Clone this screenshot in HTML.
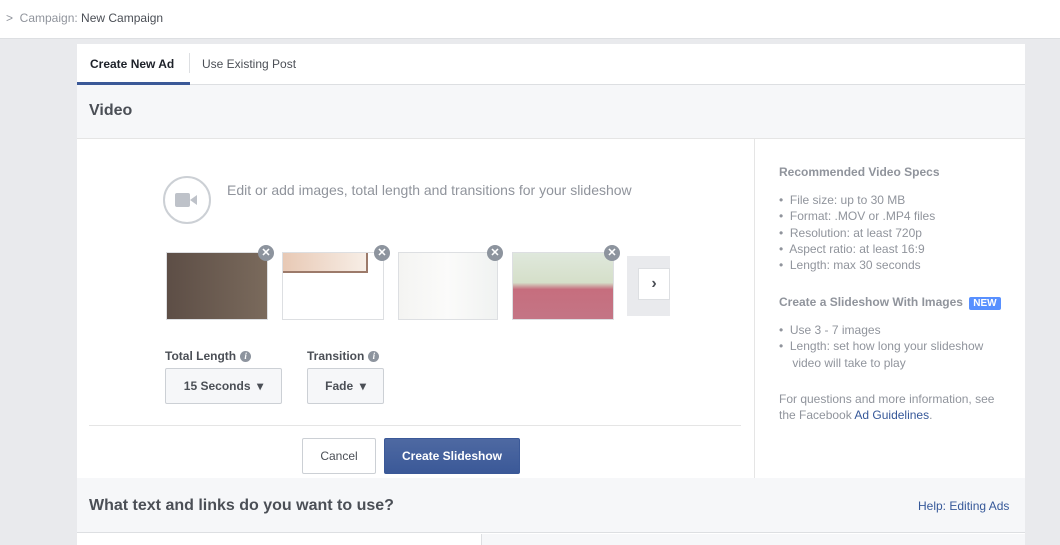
<!DOCTYPE html>
<html><head><style>
*{margin:0;padding:0;box-sizing:border-box}
body{width:1060px;height:545px;overflow:hidden;background:#e9eaed;font-family:"Liberation Sans",Arial,sans-serif;position:relative;color:#4b4f56}
.a{position:absolute}
.top{left:0;top:0;width:1060px;height:39px;background:#fff;border-bottom:1px solid #dddfe2}
.card{left:77px;top:44px;width:948px;height:501px;background:#fff}
.thumb{top:252px;height:68px;border:1px solid #dddfe2}
.x{width:16px;height:16px;border-radius:50%;background:#8d949e;color:#fff;font-size:11px;font-weight:bold;text-align:center;line-height:16px}
.btn{border:1px solid #ccd0d5;background:#f6f7f9;border-radius:2px;font-size:12px;font-weight:bold;color:#4b4f56;text-align:center}
.side{font-size:12px;color:#90949c;line-height:16.3px}
.info{display:inline-block;width:11px;height:11px;border-radius:50%;background:#8d949e;color:#fff;font-size:9px;text-align:center;line-height:11px;font-style:italic;font-family:"Liberation Serif",serif;vertical-align:middle;margin-left:4px}
</style></head><body>
<div class="a top"><div class="a" style="left:6px;top:11px;font-size:12px;color:#90949c">&gt;&nbsp; Campaign: <span style="color:#4b4f56">New Campaign</span></div></div>
<div class="a card"></div>
<div class="a" style="left:77px;top:84px;width:948px;height:1px;background:#dddfe2"></div>
<div class="a" style="left:90px;top:57px;font-size:12px;font-weight:bold;color:#1d2129">Create New Ad</div>
<div class="a" style="left:189px;top:53px;width:1px;height:20px;background:#dddfe2"></div>
<div class="a" style="left:202px;top:57px;font-size:12px;color:#4b4f56">Use Existing Post</div>
<div class="a" style="left:77px;top:82px;width:113px;height:3px;background:#3b5998"></div>
<div class="a" style="left:77px;top:85px;width:948px;height:54px;background:#f6f7f9;border-bottom:1px solid #e5e5e5"></div>
<div class="a" style="left:89px;top:102px;font-size:16px;font-weight:bold;color:#4b4f56">Video</div>
<div class="a" style="left:754px;top:139px;width:1px;height:339px;background:#e5e5e5"></div>
<div class="a" style="left:163px;top:176px;width:48px;height:48px;border:2px solid #ccd0d5;border-radius:50%"></div>
<div class="a" style="left:175px;top:193px;width:15px;height:14px;background:#bec2c9;border-radius:2px"></div>
<div class="a" style="left:190px;top:195px;width:0;height:0;border-top:5px solid transparent;border-bottom:5px solid transparent;border-right:7px solid #bec2c9"></div>
<div class="a" style="left:227px;top:182px;font-size:14px;color:#90949c">Edit or add images, total length and transitions for your slideshow</div>
<div class="a thumb" style="left:166px;width:102px;background:linear-gradient(90deg,#5d4e46,#7a6a5c)"></div>
<div class="a thumb" style="left:282px;width:102px;background:#fff"><div class="a" style="left:0;top:0;width:85px;height:20px;background:linear-gradient(90deg,#e8c9b5,#f7eee6);border-bottom:2px solid #9c7a6a;border-right:2px solid #9c7a6a"></div></div>
<div class="a thumb" style="left:398px;width:100px;background:linear-gradient(90deg,#f4f4f2,#fbfbfa,#f0f2f1)"></div>
<div class="a thumb" style="left:512px;width:102px;background:linear-gradient(180deg,#dfe8dc 0%,#d5dfc9 45%,#c66e7e 55%,#c47585 100%)"></div>
<div class="a x" style="left:258px;top:245px">✕</div>
<div class="a x" style="left:374px;top:245px">✕</div>
<div class="a x" style="left:487px;top:245px">✕</div>
<div class="a x" style="left:604px;top:245px">✕</div>
<div class="a" style="left:627px;top:256px;width:43px;height:60px;background:#e9eaed"></div>
<div class="a" style="left:638px;top:268px;width:32px;height:32px;background:#fff;border:1px solid #dddfe2;font-size:16px;font-weight:bold;text-align:center;line-height:30px;color:#4b4f56">›</div>
<div class="a" style="left:165px;top:349px;font-size:12px;font-weight:bold;color:#4b4f56">Total Length<span class="info">i</span></div>
<div class="a" style="left:307px;top:349px;font-size:12px;font-weight:bold;color:#4b4f56">Transition<span class="info">i</span></div>
<div class="a btn" style="left:165px;top:368px;width:117px;height:36px;line-height:34px">15 Seconds &nbsp;▾</div>
<div class="a btn" style="left:307px;top:368px;width:77px;height:36px;line-height:34px">Fade &nbsp;▾</div>
<div class="a" style="left:89px;top:425px;width:652px;height:1px;background:#e5e5e5"></div>
<div class="a btn" style="left:302px;top:438px;width:74px;height:36px;line-height:34px;background:#fff;font-weight:normal">Cancel</div>
<div class="a" style="left:384px;top:438px;width:136px;height:36px;background:#4267b2;background:linear-gradient(#4e69a2,#3b5998);border:1px solid #3b5998;border-radius:2px;color:#fff;font-size:12px;font-weight:bold;text-align:center;line-height:34px">Create Slideshow</div>
<div class="a side" style="left:779px;top:164px;font-weight:bold">Recommended Video Specs</div>
<div class="a side" style="left:779px;top:192px">•&nbsp; File size: up to 30 MB<br>•&nbsp; Format: .MOV or .MP4 files<br>•&nbsp; Resolution: at least 720p<br>•&nbsp; Aspect ratio: at least 16:9<br>•&nbsp; Length: max 30 seconds</div>
<div class="a side" style="left:779px;top:294px;font-weight:bold">Create a Slideshow With Images <span style="background:#5890ff;color:#fff;font-size:10px;padding:1px 4px;border-radius:2px;margin-left:3px">NEW</span></div>
<div class="a side" style="left:779px;top:322px">•&nbsp; Use 3 - 7 images<br>•&nbsp; Length: set how long your slideshow<br>&nbsp;&nbsp;&nbsp; video will take to play</div>
<div class="a side" style="left:779px;top:391px">For questions and more information, see<br>the Facebook <span style="color:#365899">Ad Guidelines</span>.</div>
<div class="a" style="left:77px;top:478px;width:948px;height:55px;background:#f6f7f9;border-bottom:1px solid #dddfe2"></div>
<div class="a" style="left:89px;top:497px;font-size:16px;font-weight:bold;color:#4b4f56">What text and links do you want to use?</div>
<div class="a" style="left:918px;top:499px;font-size:12px;color:#365899">Help: Editing Ads</div>
<div class="a" style="left:481px;top:534px;width:1px;height:11px;background:#dddfe2"></div>
<div class="a" style="left:482px;top:534px;width:543px;height:11px;background:#f6f7f9"></div>
</body></html>
